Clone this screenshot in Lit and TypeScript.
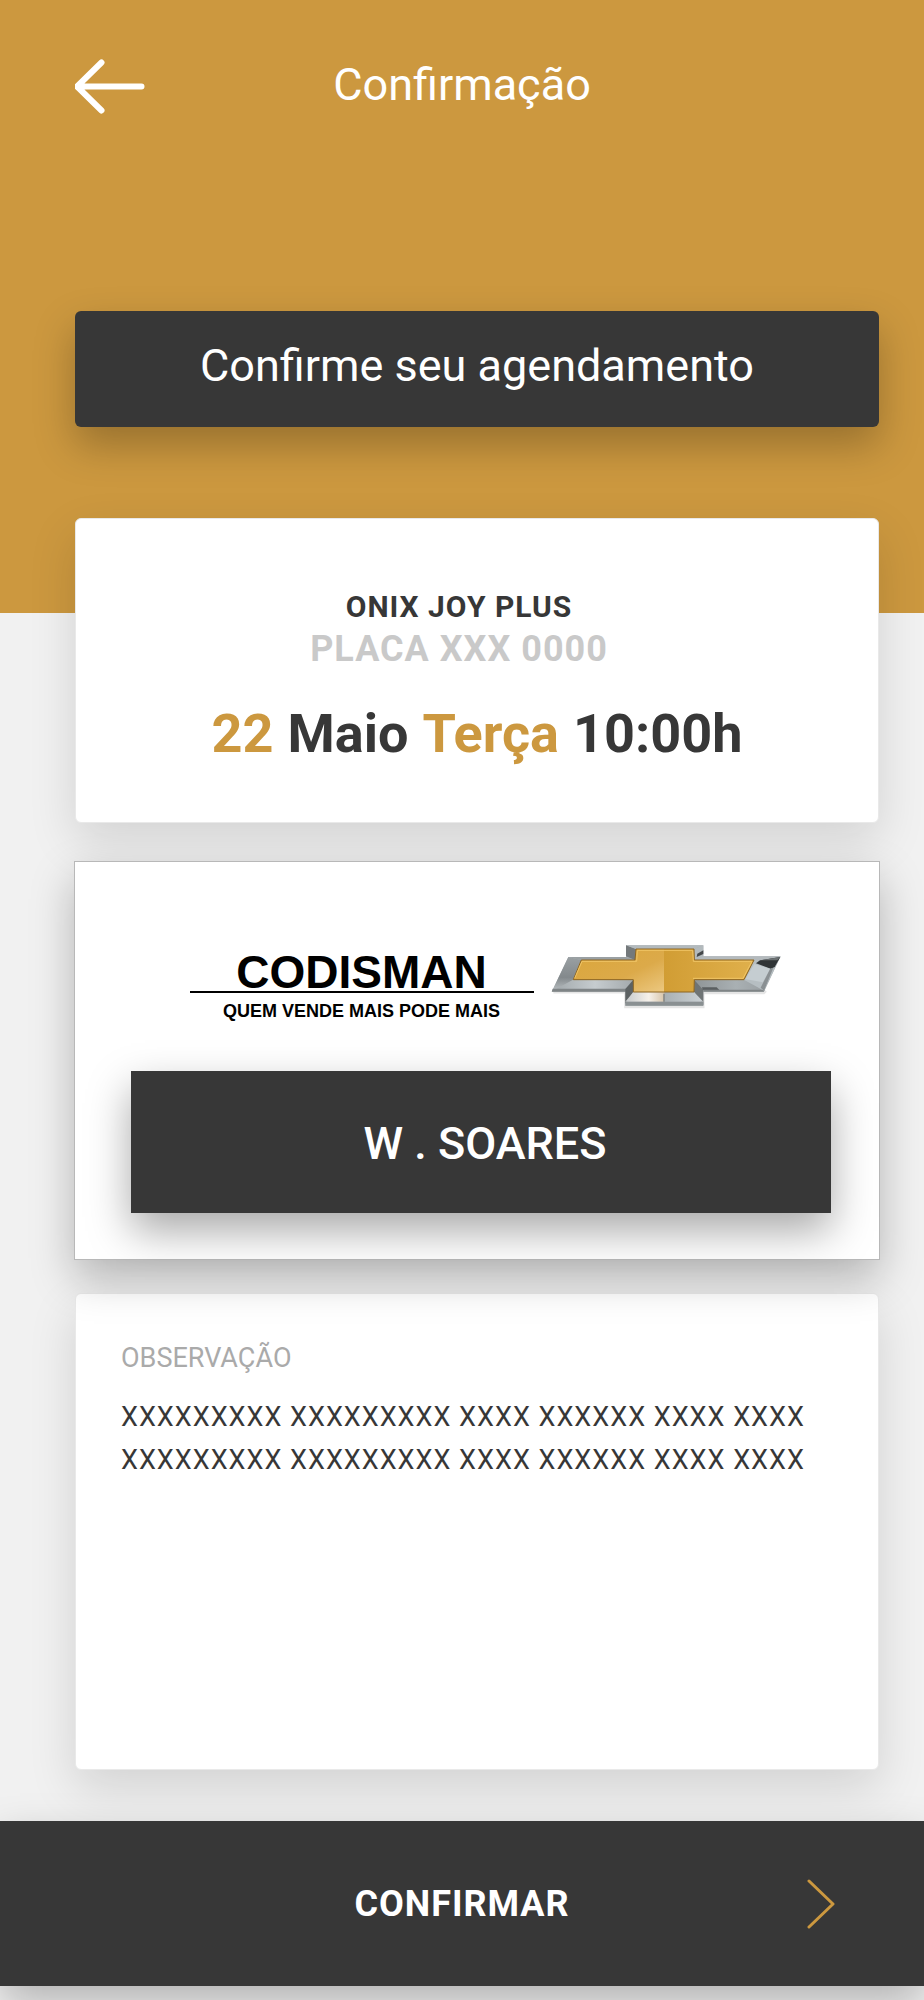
import { LitElement, html, css, svg } from "lit";
import { customElement, property } from "lit/decorators.js";

const bowtie = svg`
  <defs>
    <linearGradient id="goldLeft" x1="0" y1="0" x2="1" y2="1">
      <stop offset="0" stop-color="#dba63a" />
      <stop offset="0.6" stop-color="#dcaa4a" />
      <stop offset="1" stop-color="#ecc880" />
    </linearGradient>
    <linearGradient id="goldRight" x1="0" y1="0" x2="1" y2="0">
      <stop offset="0" stop-color="#d19d34" />
      <stop offset="1" stop-color="#e0b04c" />
    </linearGradient>
    <linearGradient id="steelLeft" x1="0" y1="0" x2="0" y2="1">
      <stop offset="0" stop-color="#9aa0a3" />
      <stop offset="0.6" stop-color="#83898c" />
      <stop offset="1" stop-color="#b9bfc2" />
    </linearGradient>
    <linearGradient id="steelBase" x1="0" y1="0" x2="1" y2="0">
      <stop offset="0" stop-color="#a4abae" />
      <stop offset="0.5" stop-color="#c6cccf" />
      <stop offset="1" stop-color="#a3a9ac" />
    </linearGradient>
    <linearGradient id="steelRight" x1="0" y1="0" x2="1" y2="0">
      <stop offset="0" stop-color="#8f9597" />
      <stop offset="0.6" stop-color="#a9b0b3" />
      <stop offset="1" stop-color="#9aa0a3" />
    </linearGradient>
    <linearGradient id="steelFoot" x1="0" y1="0" x2="1" y2="0">
      <stop offset="0" stop-color="#c5c9cb" />
      <stop offset="0.3" stop-color="#f6f1ea" />
      <stop offset="0.49" stop-color="#d9c7ad" />
      <stop offset="0.51" stop-color="#a9b0b3" />
      <stop offset="1" stop-color="#ccd2d5" />
    </linearGradient>
  </defs>
  <path d="M40 218H256V262H490V220H672L678 214" fill="none" stroke="#000" stroke-opacity=".1" stroke-width="7" />
  <path d="M85 112H258V77H490V110H722L672 216H490V258H256V216H36Z" fill="#a9afb2" />
  <path d="M85 112L124 121L100 180L36 214Z" fill="url(#steelLeft)" />
  <path d="M85 112H258L285 121H124Z" fill="#9aa0a3" />
  <path d="M258 77L288 88L285 121L258 110Z" fill="#74797b" />
  <path d="M258 77H490L462 88H288Z" fill="#b3babd" />
  <path d="M490 77L462 88L465 121L490 110Z" fill="#b3babd" />
  <path d="M490 92L472 102L470 112L490 103Z" fill="#45484a" />
  <path d="M490 110H722L716 114L705 121H465Z" fill="#b4babd" />
  <path d="M100 180H280L256 208H50Z" fill="url(#steelBase)" />
  <path d="M38 207H258V216H35Z" fill="#7f8486" />
  <path d="M280 180V217L256 252V208Z" fill="#5d6263" />
  <path d="M463 180L490 208V256L462 217Z" fill="#6f7475" />
  <path d="M463 180H612L672 211H490Z" fill="url(#steelRight)" />
  <path d="M486 203H530L538 211H488Z" fill="#5a5f61" />
  <path d="M490 210H674L671 216H490Z" fill="#7f8486" />
  <path d="M642 121H716L672 213L612 180Z" fill="#b6bec2" />
  <path d="M660 122L721 112L704 142L692 147L648 131Z" fill="#303436" />
  <path d="M660 122L721 112L712 122Z" fill="#6b7072" />
  <path d="M643 133L692 148L668 188L616 178Z" fill="#c5cdd1" />
  <path d="M700 144L672 213L662 204L690 148Z" fill="#8a9093" />
  <path d="M280 217H462L490 246H256Z" fill="url(#steelFoot)" />
  <path d="M256 246H490V258H256Z" fill="#8a9092" />
  <path d="M372 222V246" stroke="#777c7d" stroke-width="4" />
  <path d="M124 121H285L288 88H372V217H280V180H100Z" fill="url(#goldLeft)" />
  <path d="M372 88H462L463 121H642L612 180H463L462 217H372Z" fill="url(#goldRight)" />
  <path d="M124 121H285L288 88H462L463 121H642L612 180H463L462 217H280V180H100Z" fill="none" stroke="#8c6420" stroke-width="3" />
  <path d="M104 176L126 125H290L292 92H458L460 125H636L609 176H459" fill="none" stroke="#f0c566" stroke-width="3" />
`;

@customElement("app-root")
export class AppRoot extends LitElement {
  @property() heading = "Confirmação";
  @property() note =
    "XXXXXXXXX XXXXXXXXX XXXX XXXXXX XXXX XXXX\nXXXXXXXXX XXXXXXXXX XXXX XXXXXX XXXX XXXX";

  static styles = css`
    :host {
      --gold: #cc983f;
      --dark: #373737;
      display: flex;
      flex-direction: column;
      min-height: 100vh;
      box-sizing: border-box;
      padding-bottom: 14px;
      overflow: hidden;
      background: #f1f1f1;
      color: var(--dark);
      font-family: Roboto, "Liberation Sans", sans-serif;
    }
    * {
      box-sizing: border-box;
      margin: 0;
    }
    svg {
      display: block;
    }
    button,
    textarea {
      font: inherit;
      color: inherit;
      border: 0;
      border-radius: 0;
      padding: 0;
      background: none;
    }
    button {
      cursor: pointer;
    }
    .top {
      background: var(--gold);
      color: #fff;
      padding: 58px 45px 186px 75px;
    }
    .bar {
      display: grid;
      grid-template-columns: 72px 1fr 102px;
      align-items: start;
      height: 56px;
      margin-bottom: 197px;
    }
    .title {
      text-align: center;
      font-size: 45px;
      line-height: 54px;
      font-weight: 400;
    }
    .banner {
      border-radius: 6px;
      background: var(--dark);
      box-shadow: 0 18px 40px rgba(0, 0, 0, 0.26);
      padding-bottom: 6px;
      text-align: center;
      font-size: 45px;
      line-height: 110px;
      font-weight: 400;
    }
    .cards {
      flex: 1;
      display: flex;
      flex-direction: column;
      margin-top: -95px;
      padding: 0 45px 51px 75px;
    }
    .card {
      border: 1px solid #e9e9e9;
      border-radius: 6px;
      background: #fff;
      box-shadow: 0 18px 48px rgba(0, 0, 0, 0.13);
    }
    .visit {
      padding: 68px 0 56px;
      text-align: center;
    }
    .car {
      padding-right: 36px;
      font-weight: 700;
      letter-spacing: 1px;
    }
    .model {
      font-size: 30px;
      line-height: 40px;
    }
    .plate {
      font-size: 36px;
      line-height: 44px;
      color: #c9c9c9;
    }
    .when {
      display: flex;
      justify-content: center;
      gap: 14px;
      margin-top: 31px;
      font-size: 54px;
      line-height: 64px;
      font-weight: 700;
    }
    .accent {
      color: var(--gold);
    }
    .dealer {
      position: relative;
      z-index: 1;
      margin: 38px -1px 33px;
      padding: 81px 48px 46px 56px;
      border-color: #b8b8b8;
      border-radius: 0;
      box-shadow: 0 18px 40px rgba(0, 0, 0, 0.25);
    }
    .brands {
      display: flex;
      justify-content: center;
      gap: 17px;
      padding-left: 10px;
      margin-bottom: 48px;
    }
    .wordmark {
      padding-top: 10px;
      width: 344px;
      text-align: center;
      color: #000;
      font-family: "Liberation Sans", Arial, sans-serif;
      font-weight: 700;
    }
    .name {
      border-bottom: 2px solid #000;
      font-size: 46px;
      line-height: 38px;
    }
    .slogan {
      margin-top: 6px;
      font-size: 18px;
      line-height: 24px;
      white-space: nowrap;
    }
    .seller {
      display: block;
      width: 100%;
      min-height: 142px;
      padding: 4px 0 0 8px;
      background: var(--dark);
      color: #fff;
      box-shadow: 0 18px 40px rgba(0, 0, 0, 0.34);
      font-size: 45px;
      line-height: 54px;
      font-weight: 500;
    }
    .notes {
      flex: 1;
      display: flex;
      flex-direction: column;
      padding: 48px 45px 19px;
    }
    .label {
      font-size: 27px;
      line-height: 32px;
      color: #aaa;
    }
    .text {
      flex: 1;
      display: block;
      width: 100%;
      min-height: 172px;
      margin-top: 22px;
      resize: none;
      outline: none;
      overflow: hidden;
      font-size: 27px;
      line-height: 43px;
      letter-spacing: 1px;
    }
    .confirm {
      display: grid;
      grid-template-columns: 1fr auto 1fr;
      align-items: center;
      width: 100%;
      min-height: 165px;
      padding: 0 88px;
      background: var(--dark);
      color: #fff;
      box-shadow: 0 18px 40px rgba(0, 0, 0, 0.25);
      font-size: 36px;
      line-height: 44px;
      font-weight: 700;
      letter-spacing: 1px;
    }
    .go {
      grid-column: 2;
    }
    .next {
      justify-self: end;
    }
  `;

  render() {
    return html`
      <header class="top">
        <div class="bar">
          <button class="back" aria-label="Voltar">
            <svg width="72" height="56" viewBox="0 0 72 56" fill="none" stroke="#fff" stroke-width="6" stroke-linecap="round" stroke-linejoin="round">
              <path d="M26.500 4.500L2 28.500L26.500 52.500M2 28.500H66.500" />
            </svg>
          </button>
          <h1 class="title">${this.heading}</h1>
        </div>
        <h2 class="banner">Confirme seu agendamento</h2>
      </header>

      <main class="cards">
        <section class="card visit">
          <div class="car">
            <p class="model">ONIX JOY PLUS</p>
            <p class="plate">PLACA XXX 0000</p>
          </div>
          <p class="when">
            <span class="accent">22</span><span>Maio</span>
            <span class="accent">Terça</span><span>10:00h</span>
          </p>
        </section>

        <section class="card dealer">
          <div class="brands">
            <div class="wordmark">
              <p class="name">CODISMAN</p>
              <p class="slogan">QUEM VENDE MAIS PODE MAIS</p>
            </div>
            <svg width="232" height="66" viewBox="33 70 696 198" role="img" aria-label="Chevrolet">${bowtie}</svg>
          </div>
          <button class="seller">W . SOARES</button>
        </section>

        <section class="card notes">
          <label class="label" for="note">OBSERVAÇÃO</label>
          <textarea class="text" id="note" spellcheck="false" .value=${this.note}></textarea>
        </section>
      </main>

      <button class="confirm">
        <span class="go">CONFIRMAR</span>
        <svg class="next" width="30" height="50" viewBox="0 0 30 50" fill="none" stroke="#cc983f" stroke-width="3" stroke-linecap="round" stroke-linejoin="round">
          <path d="M3 2L27 25L3 48" />
        </svg>
      </button>
    `;
  }
}
